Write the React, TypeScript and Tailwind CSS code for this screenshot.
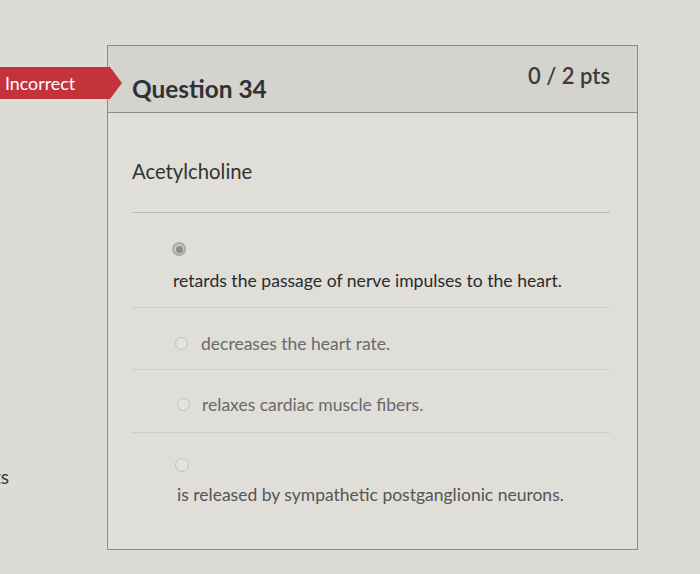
import React from "react";

const Radio = ({ checked = false, size = 13 }: { checked?: boolean; size?: number }) => (
  <div
    className={
      "shrink-0 rounded-full flex items-center justify-center " +
      (checked ? "border-[2px] border-[#a9a9a6] bg-[#c9c9c5]" : "border border-[#c2c2bd] bg-[#e4e3de]")
    }
    style={{ width: size, height: size }}
  >
    {checked && <div className="w-[7px] h-[7px] rounded-full bg-[#8d8d8a]" />}
  </div>
);

export default function App() {
  return (
    <div
      className="relative w-[700px] h-[574px] overflow-hidden bg-[#dcdbd5] flex"
      style={{ fontFamily: "Lato, 'Open Sans', sans-serif" }}
    >
      {/* left column */}
      <div className="w-[107px] shrink-0 flex flex-col overflow-hidden">
        <div className="mt-[467px] text-[19px] leading-none text-[#3a3a3a] -ml-[6px]">ts</div>
      </div>

      {/* Incorrect badge overlay */}
      <div
        className="absolute left-0 top-[67px] h-[32px] w-[122px] bg-[#c4333b] flex items-center pl-[5px] text-white text-[17.8px]"
        style={{ clipPath: "polygon(0 0, 110px 0, 122px 50%, 110px 100%, 0 100%)" }}
      >
        Incorrect
      </div>

      {/* card */}
      <div className="mt-[45px] w-[531px] h-[505px] border border-[#8c8c88] bg-[#dfded8] flex flex-col">
        <div className="h-[67px] shrink-0 bg-[#d4d3cd] border-b border-[#8c8c88] flex justify-between items-start pl-[24px] pr-[27px]">
          <div className="mt-[31px] text-[24.4px] leading-none font-bold text-[#2d3237]">Question 34</div>
          <div className="mt-[19px] text-[22px] leading-none font-semibold text-[#3b3b3b]">0 / 2 pts</div>
        </div>

        <div className="flex flex-col pl-[24px] pr-[27px]">
          <div className="mt-[48px] text-[20.3px] leading-none text-[#333333]">Acetylcholine</div>
          <div className="mt-[31px] h-px bg-[#bcbcb7]" />

          <div className="mt-[29px] ml-[40px]">
            <Radio checked size={14} />
          </div>
          <div className="mt-[16px] ml-[41px] text-[17.6px] leading-none text-[#2b2b2b]">
            retards the passage of nerve impulses to the heart.
          </div>
          <div className="mt-[17px] h-px bg-[#cdccc6]" />

          <div className="mt-[26px] h-[20px] ml-[43px] flex items-center gap-[13px]">
            <Radio />
            <span className="text-[17.5px] leading-none text-[#6a6a6a]">decreases the heart rate.</span>
          </div>
          <div className="mt-[15px] h-px bg-[#cdccc6]" />

          <div className="mt-[25px] h-[20px] ml-[45px] flex items-center gap-[12px]">
            <Radio />
            <span className="text-[17.5px] leading-none text-[#6a6a6a]">relaxes cardiac muscle fibers.</span>
          </div>
          <div className="mt-[17px] h-px bg-[#cdccc6]" />

          <div className="mt-[25px] ml-[43px]">
            <Radio size={14} />
          </div>
          <div className="mt-[14px] ml-[45px] text-[17.5px] leading-none text-[#555555]">
            is released by sympathetic postganglionic neurons.
          </div>
        </div>
      </div>
    </div>
  );
}
